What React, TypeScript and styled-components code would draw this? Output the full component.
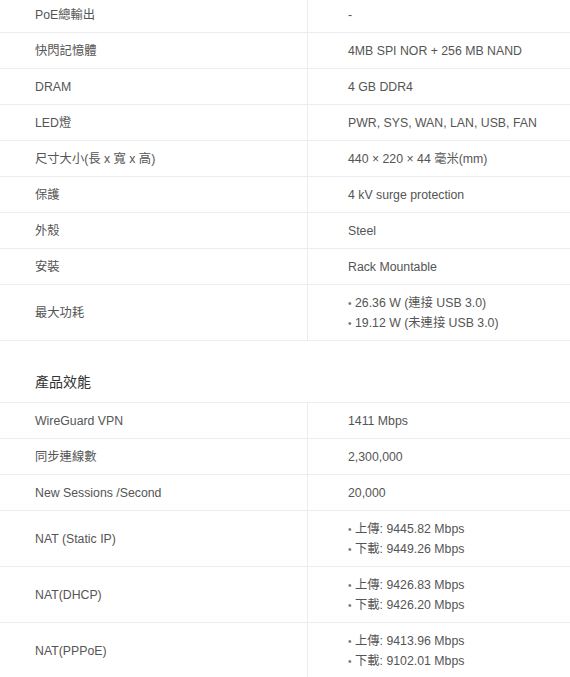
import styled, { createGlobalStyle } from 'styled-components'

const GlobalStyle = createGlobalStyle`
  body {
    margin: 0;
    background: #ffffff;
    font-family: "Liberation Sans", Arial, "Noto Sans CJK TC", sans-serif;
    color: #555555;
  }
`

const Page = styled.div`
  margin-top: -3px;
  width: 570px;
`

const Table = styled.div<{ $top?: boolean }>`
  display: grid;
  grid-template-columns: 308px 1fr;
  border-top: ${(p) => (p.$top ? '1px solid #ebebf0' : 'none')};
`

const Cell = styled.div<{ $label?: boolean }>`
  display: flex;
  flex-direction: column;
  justify-content: center;
  padding: 8px 0 7px ${(p) => (p.$label ? '35px' : '40px')};
  border-bottom: 1px solid #ebebf0;
  border-right: ${(p) => (p.$label ? '1px solid #ebebf0' : 'none')};
  font-size: 12.3px;
  line-height: 20px;
  color: #555555;
`

const Bullets = styled.ul`
  margin: 0;
  padding: 0;
  list-style: none;
`

const Bullet = styled.li`
  height: 20px;
  white-space: nowrap;

  &::before {
    content: '•';
    display: inline-block;
    width: 7px;
    font-size: 10px;
    line-height: 10px;
    color: #777777;
  }
`

const SectionTitle = styled.h3`
  margin: 0;
  padding: 33px 0 11px 35px;
  font-size: 14px;
  line-height: 17px;
  font-weight: normal;
  color: #333333;
`

type Row = { label: string; value: string | string[] }

const hardware: Row[] = [
  { label: 'PoE總輸出', value: '-' },
  { label: '快閃記憶體', value: '4MB SPI NOR + 256 MB NAND' },
  { label: 'DRAM', value: '4 GB DDR4' },
  { label: 'LED燈', value: 'PWR, SYS, WAN, LAN, USB, FAN' },
  { label: '尺寸大小(長 x 寬 x 高)', value: '440 × 220 × 44 毫米(mm)' },
  { label: '保護', value: '4 kV surge protection' },
  { label: '外殼', value: 'Steel' },
  { label: '安裝', value: 'Rack Mountable' },
  { label: '最大功耗', value: ['26.36 W (連接 USB 3.0)', '19.12 W (未連接 USB 3.0)'] },
]

const performance: Row[] = [
  { label: 'WireGuard VPN', value: '1411 Mbps' },
  { label: '同步連線數', value: '2,300,000' },
  { label: 'New Sessions /Second', value: '20,000' },
  { label: 'NAT (Static IP)', value: ['上傳: 9445.82 Mbps', '下載: 9449.26 Mbps'] },
  { label: 'NAT(DHCP)', value: ['上傳: 9426.83 Mbps', '下載: 9426.20 Mbps'] },
  { label: 'NAT(PPPoE)', value: ['上傳: 9413.96 Mbps', '下載: 9102.01 Mbps'] },
]

const SpecTable = ({ rows, top }: { rows: Row[]; top?: boolean }) => (
  <Table $top={top}>
    {rows.map((r) => [
      <Cell $label key={r.label + '-l'}>{r.label}</Cell>,
      <Cell key={r.label + '-v'}>
        {Array.isArray(r.value) ? (
          <Bullets>
            {r.value.map((v) => (
              <Bullet key={v}>{v}</Bullet>
            ))}
          </Bullets>
        ) : (
          r.value
        )}
      </Cell>,
    ])}
  </Table>
)

const App = () => {
  return (
    <Page>
      <GlobalStyle />
      <SpecTable rows={hardware} />
      <SectionTitle>產品效能</SectionTitle>
      <SpecTable rows={performance} top />
    </Page>
  )
}

export default App
